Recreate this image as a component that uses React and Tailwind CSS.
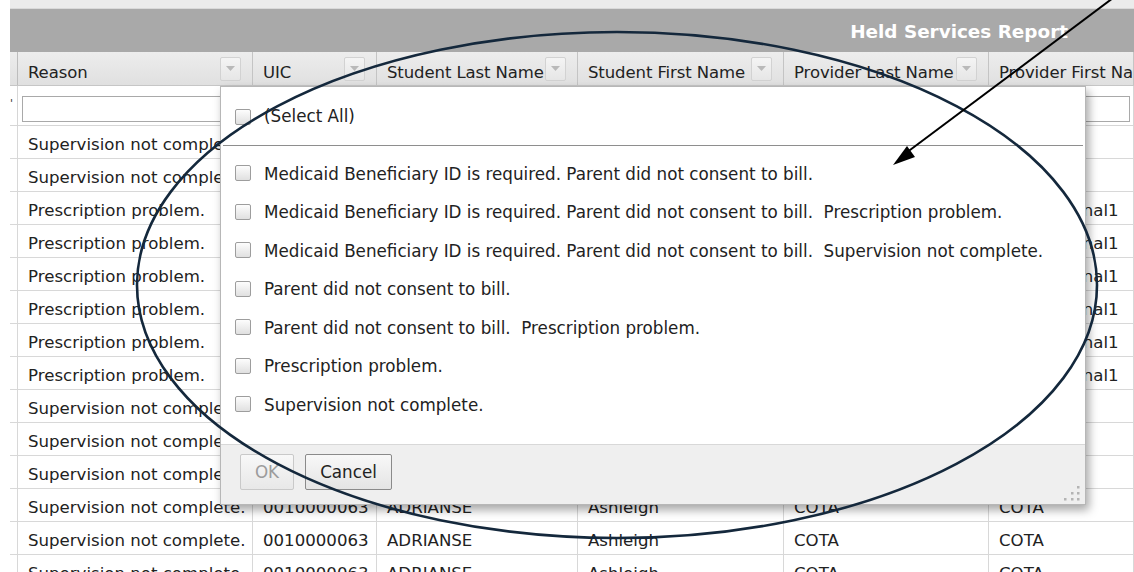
import React from "react";

const COLS = [
  { key: "sel", w: "w-[8px]" },
  { key: "reason", w: "w-[235px]", title: "Reason" },
  { key: "uic", w: "w-[124px]", title: "UIC" },
  { key: "sl", w: "w-[201px]", title: "Student Last Name" },
  { key: "sf", w: "w-[206px]", title: "Student First Name" },
  { key: "pl", w: "w-[205px]", title: "Provider Last Name" },
  { key: "pf", w: "flex-1", title: "Provider First Name" },
];

const SUP = "Supervision not complete.";
const PRE = "Prescription problem.";

const base = { uic: "0010000063", sl: "ADRIANSE", sf: "Ashleigh", pl: "COTA" };
const ROWS = [
  { ...base, reason: SUP, pf: "COTA" },
  { ...base, reason: SUP, pf: "COTA" },
  { ...base, reason: PRE, pf: "Occupational1" },
  { ...base, reason: PRE, pf: "Occupational1" },
  { ...base, reason: PRE, pf: "Occupational1" },
  { ...base, reason: PRE, pf: "Occupational1" },
  { ...base, reason: PRE, pf: "Occupational1" },
  { ...base, reason: PRE, pf: "Occupational1" },
  { ...base, reason: SUP, pf: "COTA" },
  { ...base, reason: SUP, pf: "COTA" },
  { ...base, reason: SUP, pf: "COTA" },
  { ...base, reason: SUP, pf: "COTA" },
  { ...base, reason: SUP, pf: "COTA" },
  { ...base, reason: SUP, pf: "COTA" },
];

const OPTIONS = [
  "Medicaid Beneficiary ID is required. Parent did not consent to bill.",
  "Medicaid Beneficiary ID is required. Parent did not consent to bill.\u00a0 Prescription problem.",
  "Medicaid Beneficiary ID is required. Parent did not consent to bill.\u00a0 Supervision not complete.",
  "Parent did not consent to bill.",
  "Parent did not consent to bill.\u00a0 Prescription problem.",
  "Prescription problem.",
  "Supervision not complete.",
];

function FilterButton() {
  return (
    <div className="w-[21px] h-[24px] shrink-0 ml-auto border border-[#d2d2d2] rounded-[2px] bg-linear-to-b from-[#f4f4f4] to-[#e6e6e6] flex items-center justify-center">
      <svg width="9" height="5" viewBox="0 0 9 5">
        <path d="M0 0 L9 0 L4.5 5 Z" fill="#b9b9b9" />
      </svg>
    </div>
  );
}

function Checkbox() {
  return (
    <div className="w-[16px] h-[16px] shrink-0 border border-[#9d9d9d] rounded-[2px] bg-linear-to-b from-[#fdfdfd] to-[#e0e0e0]" />
  );
}

function HeaderRow() {
  return (
    <div className="flex h-[34px] bg-linear-to-b from-[#ededed] to-[#e0e0e0] border-b border-[#c6c6c6]">
      {COLS.map((c) =>
        c.key === "sel" ? (
          <div key={c.key} className={`${c.w} shrink-0 border-r border-[#bdbdbd]`} />
        ) : (
          <div
            key={c.key}
            className={`${c.w} shrink-0 min-w-0 overflow-hidden flex items-center pl-[10px] pr-[11px] border-r border-[#c4c4c4]`}
          >
            <span className="whitespace-nowrap shrink-0 mt-[10px] tracking-[-0.1px]">{c.title}</span>
            {c.key !== "pf" && <FilterButton />}
          </div>
        )
      )}
    </div>
  );
}

function FilterRow() {
  return (
    <div className="flex h-[40px] bg-white border-b border-[#d6d6d6]">
      {COLS.map((c) =>
        c.key === "sel" ? (
          <div key={c.key} className={`${c.w} shrink-0 border-r border-[#d6d6d6] text-[11px] leading-none pt-[12px] text-[#333]`}>
            '
          </div>
        ) : (
          <div key={c.key} className={`${c.w} shrink-0 pl-[4px] pr-[3px] pt-[10px] border-r border-[#d6d6d6]`}>
            <div className="h-[26px] border border-[#a9a9a9] bg-white" />
          </div>
        )
      )}
    </div>
  );
}

function DataRow({ row }) {
  return (
    <div className="flex h-[33px] border-b border-[#d8d8d8]">
      {COLS.map((c) =>
        c.key === "sel" ? (
          <div key={c.key} className={`${c.w} shrink-0 border-r border-[#d8d8d8]`} />
        ) : (
          <div
            key={c.key}
            className={`${c.w} shrink-0 min-w-0 flex items-center pl-[10px] pt-[6px] border-r border-[#d8d8d8] whitespace-nowrap overflow-hidden text-[16.6px]`}
          >
            {row[c.key]}
          </div>
        )
      )}
    </div>
  );
}

function ResizeGrip() {
  return (
    <svg width="18" height="16" viewBox="0 0 18 16">
      <g fill="#b4b4b4">
        <rect x="14" y="1" width="2.5" height="2.5" />
        <rect x="8" y="7" width="2.5" height="2.5" />
        <rect x="14" y="7" width="2.5" height="2.5" />
        <rect x="1" y="13" width="2.5" height="2.5" />
        <rect x="8" y="13" width="2.5" height="2.5" />
        <rect x="14" y="13" width="2.5" height="2.5" />
      </g>
    </svg>
  );
}

function FilterPopup() {
  return (
    <div className="absolute left-[220px] top-[86px] w-[866px] h-[419px] bg-white border border-[#b7b7b7] shadow-[3px_5px_9px_rgba(0,0,0,0.35)] flex flex-col text-[16.75px]">
      <div className="pt-[20px] pl-[14px] flex items-center gap-[13px] h-[40px]">
        <Checkbox />
        <span>(Select All)</span>
      </div>
      <div className="mt-[18px] mx-[2px] h-px bg-[#8e8e8e]" />
      <div className="pt-[8px] pl-[14px] flex flex-col">
        {OPTIONS.map((o) => (
          <div key={o} className="h-[38.5px] flex items-center gap-[13px]">
            <Checkbox />
            <span className="whitespace-nowrap pt-[2px]">{o}</span>
          </div>
        ))}
      </div>
      <div className="flex-1" />
      <div className="relative h-[60px] bg-[#efefef] border-t border-[#d8d8d8] flex items-start gap-[11px] pl-[19px] pt-[9px]">
        <button className="w-[54px] h-[36px] border border-[#c9c9c9] rounded-[2px] bg-linear-to-b from-[#f8f8f8] to-[#e8e8e8] text-[#9c9c9c] pt-[2px]">
          OK
        </button>
        <button className="w-[87px] h-[36px] border border-[#8a8a8a] rounded-[2px] bg-linear-to-b from-[#f8f8f8] to-[#e4e4e4] text-[#222] pt-[2px]">
          Cancel
        </button>
        <div className="absolute right-[4px] bottom-[3px]">
          <ResizeGrip />
        </div>
      </div>
    </div>
  );
}

function Annotations() {
  return (
    <svg className="absolute inset-0 pointer-events-none" width="1134" height="572" viewBox="0 0 1134 572">
      <ellipse cx="617" cy="285" rx="480" ry="253" fill="none" stroke="#14283c" strokeWidth="2.6" />
      <line x1="1113" y1="-2" x2="906" y2="153" stroke="#000" strokeWidth="2" />
      <path d="M893 165 L915 157 L907 146 Z" fill="#000" />
    </svg>
  );
}

export default function App() {
  return (
    <div className="relative w-[1134px] h-[572px] overflow-hidden bg-white text-[#222] text-[16.5px] font-['DejaVu_Sans',Verdana,sans-serif]">
      <div className="ml-[10px]">
        <div className="h-[9px] bg-[#ebebeb] border-b border-[#d9d9d9]" />
        <div className="h-[43px] bg-[#a9a9a9] flex items-center justify-end pr-[66px] pt-[2px]">
          <span className="text-white font-bold text-[18.4px]">Held Services Report</span>
        </div>
        <HeaderRow />
        <FilterRow />
        {ROWS.map((r, i) => (
          <DataRow key={i} row={r} />
        ))}
      </div>
      <FilterPopup />
      <Annotations />
    </div>
  );
}
